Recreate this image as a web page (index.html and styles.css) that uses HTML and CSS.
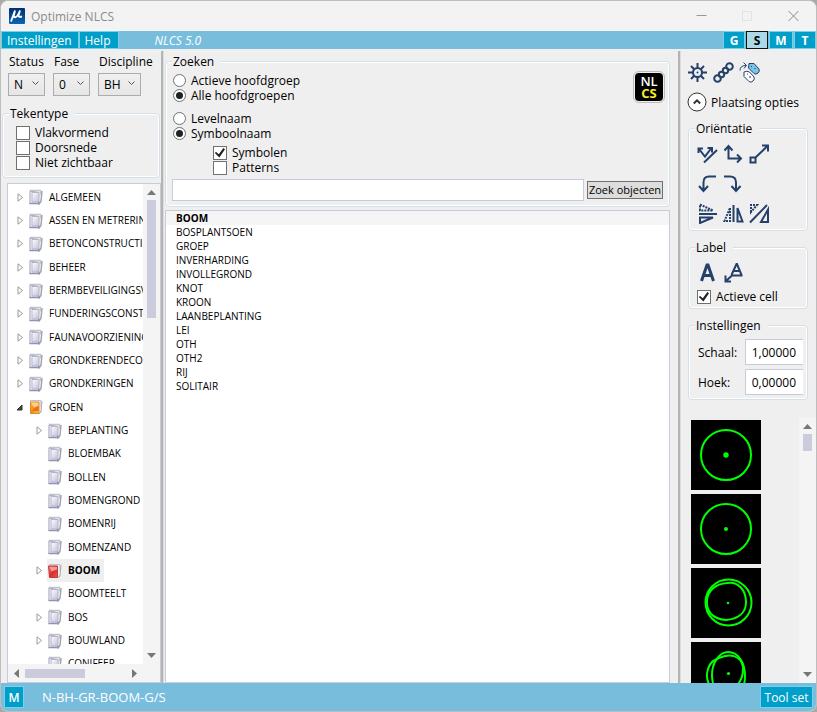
FILE: index.html
```html
<!DOCTYPE html>
<html lang="nl">
<head>
<meta charset="utf-8">
<meta name="viewport" content="width=device-width, initial-scale=1">
<title>Optimize NLCS</title>
<link rel="stylesheet" href="styles.css">
</head>
<body>
<svg class="defs" aria-hidden="true">
  <defs>
    <linearGradient id="gGrey" x1="0" y1="0" x2="1" y2="1"><stop offset="0" stop-color="#fff"/><stop offset="1" stop-color="#bfc0d8"/></linearGradient>
    <linearGradient id="gOrange" x1="0" y1="0" x2="1" y2="1"><stop offset="0" stop-color="#ffb84a"/><stop offset=".5" stop-color="#f08a1c"/><stop offset="1" stop-color="#ffc45c"/></linearGradient>
    <linearGradient id="gRed" x1="0" y1="0" x2="1" y2="1"><stop offset="0" stop-color="#f58a85"/><stop offset=".5" stop-color="#d92d2d"/><stop offset="1" stop-color="#e8544f"/></linearGradient>
    <symbol id="book" viewBox="0 0 14 16">
      <path d="M1.500 1.500h10v12h-10z" fill="#f3f3f8" stroke="#c4c4cc" stroke-width="1.500"/>
      <path d="M13 2l-1 10-2 3-1-4" fill="#fff" stroke="#a3a3b0" stroke-width="1.500"/>
      <path d="M1 2v12.500h8.500V3.500z" fill="#f4f4fa" stroke="#a9a9c0"/>
      <path d="M3 3.500h7v8.500l-1 1H3z" fill="url(#gGrey)" stroke="#b4b4cc"/>
      <path d="M.5 14.500h9l1-1.500" fill="none" stroke="#9191b2" stroke-width="1.400"/>
    </symbol>
    <symbol id="bookOrange" viewBox="0 0 14 16">
      <path d="M1.500 1.500h10.500v12H1.500z" fill="#f7f3e8" stroke="#c0c0c8"/>
      <path d="M13 2l-1 10-2 3" fill="#fff" stroke="#a9a9b4"/>
      <path d="M1.500 3h8.500v11.500H1.500z" fill="url(#gOrange)" stroke="#d98a2a"/>
      <path d="M2 3.500l3 5 4.500-2v-3z" fill="#ffd08a"/><path d="M3 12l3-3 3.500-2v5z" fill="#ee6e12"/>
    </symbol>
    <symbol id="bookRed" viewBox="0 0 14 16">
      <path d="M1.500 1.500h10.500v12H1.500z" fill="#f4eeee" stroke="#c0c0c8"/>
      <path d="M13 2l-1 10-2 3" fill="#fff" stroke="#a9a9b4"/>
      <path d="M.5 3h9v11.500H1.500z" fill="url(#gRed)" stroke="#c23a3a"/>
      <path d="M1.500 4l2 4.500 5.500-2V4z" fill="#f09a96"/>
    </symbol>
    <symbol id="closed" viewBox="0 0 7 9"><path d="M1 .8v7.400l4.500-3.700z" fill="#fff" stroke="#999"/></symbol>
    <symbol id="open" viewBox="0 0 7 9"><path d="M5 2v5H0z" fill="#444" stroke="#333"/></symbol>
    <symbol id="up" viewBox="0 0 9 5"><path d="M0 5l4.500-5L9 5z" fill="#777"/></symbol>
    <symbol id="down" viewBox="0 0 9 5"><path d="M0 0l4.500 5L9 0z" fill="#777"/></symbol>
    <symbol id="left" viewBox="0 0 5 9"><path d="M5 0L0 4.500 5 9z" fill="#777"/></symbol>
    <symbol id="right" viewBox="0 0 5 9"><path d="M0 0l5 4.500L0 9z" fill="#777"/></symbol>
  </defs>
</svg>
<div class="window">
  <header class="titlebar">
    <svg class="logo" viewBox="0 0 16 16"><defs><linearGradient id="gBlue" x1="0" y1="0" x2="0" y2="1"><stop offset="0" stop-color="#002e6e"/><stop offset="1" stop-color="#0a66b8"/></linearGradient></defs><rect width="16" height="16" rx="1" fill="url(#gBlue)"/><path d="M6 2.500L2 13.500M6 2.500L4.800 7.500q-.3 2 1.500 1.800Q8.500 9 11 2.500L9.500 7.500q-.3 2 3.500 1" fill="none" stroke="#fff" stroke-width="1.900"/></svg>
    <span class="title">Optimize NLCS</span>
    <button class="caption" aria-label="Minimaliseren"><svg viewBox="0 0 11 11"><path d="M.5 4.500h10" stroke="#999"/></svg></button>
    <button class="caption" aria-label="Maximaliseren"><svg viewBox="0 0 11 11"><path d="M.5.5h9v9h-9z" stroke="#e2e2e2"/></svg></button>
    <button class="caption" aria-label="Sluiten"><svg viewBox="0 0 11 11"><path d="M.5 0l10 10M10.500 0l-10 10" stroke="#8a8a8a"/></svg></button>
  </header>
  <nav class="menubar">
    <button class="menu">Instellingen</button><button class="menu">Help</button>
    <em class="version">NLCS 5.0</em>
    <div class="modes"><button class="mode">G</button><button class="mode active">S</button><button class="mode">M</button><button class="mode">T</button></div>
  </nav>
  <main class="content">
    <section class="side">
      <div class="selects">
        <div class="field"><label for="status">Status</label><div class="combo"><select id="status"><option>N</option></select><svg viewBox="0 0 7 4"><path d="M.5.5l3 3 3-3"/></svg></div></div>
        <div class="field"><label for="fase">Fase</label><div class="combo"><select id="fase"><option>0</option></select><svg viewBox="0 0 7 4"><path d="M.5.5l3 3 3-3"/></svg></div></div>
        <div class="field"><label for="discipline">Discipline</label><div class="combo"><select id="discipline"><option>BH</option></select><svg viewBox="0 0 7 4"><path d="M.5.5l3 3 3-3"/></svg></div></div>
      </div>
      <fieldset class="group types">
        <legend>Tekentype</legend>
        <label class="check"><input type="checkbox">Vlakvormend</label>
        <label class="check"><input type="checkbox">Doorsnede</label>
        <label class="check"><input type="checkbox">Niet zichtbaar</label>
      </fieldset>
      <div class="treebox">
        <ul class="tree">
          <li><svg class="arrow"><use href="#closed"/></svg><svg class="book"><use href="#book"/></svg><span>ALGEMEEN</span></li>
          <li><svg class="arrow"><use href="#closed"/></svg><svg class="book"><use href="#book"/></svg><span>ASSEN EN METRERIN</span></li>
          <li><svg class="arrow"><use href="#closed"/></svg><svg class="book"><use href="#book"/></svg><span>BETONCONSTRUCTIE</span></li>
          <li><svg class="arrow"><use href="#closed"/></svg><svg class="book"><use href="#book"/></svg><span>BEHEER</span></li>
          <li><svg class="arrow"><use href="#closed"/></svg><svg class="book"><use href="#book"/></svg><span>BERMBEVEILIGINGSV</span></li>
          <li><svg class="arrow"><use href="#closed"/></svg><svg class="book"><use href="#book"/></svg><span>FUNDERINGSCONSTR</span></li>
          <li><svg class="arrow"><use href="#closed"/></svg><svg class="book"><use href="#book"/></svg><span>FAUNAVOORZIENING</span></li>
          <li><svg class="arrow"><use href="#closed"/></svg><svg class="book"><use href="#book"/></svg><span>GRONDKERENDECON</span></li>
          <li><svg class="arrow"><use href="#closed"/></svg><svg class="book"><use href="#book"/></svg><span>GRONDKERINGEN</span></li>
          <li><svg class="arrow"><use href="#open"/></svg><svg class="book"><use href="#bookOrange"/></svg><span>GROEN</span></li>
          <li class="child"><svg class="arrow"><use href="#closed"/></svg><svg class="book"><use href="#book"/></svg><span>BEPLANTING</span></li>
          <li class="child"><svg class="arrow"></svg><svg class="book"><use href="#book"/></svg><span>BLOEMBAK</span></li>
          <li class="child"><svg class="arrow"></svg><svg class="book"><use href="#book"/></svg><span>BOLLEN</span></li>
          <li class="child"><svg class="arrow"></svg><svg class="book"><use href="#book"/></svg><span>BOMENGROND</span></li>
          <li class="child"><svg class="arrow"></svg><svg class="book"><use href="#book"/></svg><span>BOMENRIJ</span></li>
          <li class="child"><svg class="arrow"></svg><svg class="book"><use href="#book"/></svg><span>BOMENZAND</span></li>
          <li class="child selected"><svg class="arrow"><use href="#closed"/></svg><div class="mark"><svg class="book"><use href="#bookRed"/></svg><span>BOOM</span></div></li>
          <li class="child"><svg class="arrow"></svg><svg class="book"><use href="#book"/></svg><span>BOOMTEELT</span></li>
          <li class="child"><svg class="arrow"><use href="#closed"/></svg><svg class="book"><use href="#book"/></svg><span>BOS</span></li>
          <li class="child"><svg class="arrow"><use href="#closed"/></svg><svg class="book"><use href="#book"/></svg><span>BOUWLAND</span></li>
          <li class="child"><svg class="arrow"></svg><svg class="book"><use href="#book"/></svg><span>CONIFEER</span></li>
        </ul>
        <div class="vscroll tree-v"><svg class="tick"><use href="#up"/></svg><div class="track"><i class="thumb"></i></div><svg class="tick"><use href="#down"/></svg></div>
        <div class="hscroll"><svg class="htick"><use href="#left"/></svg><div class="track"><i class="thumb"></i></div><svg class="htick"><use href="#right"/></svg></div>
      </div>
    </section>
    <div class="splitter"></div>
    <section class="center">
      <fieldset class="group search">
        <legend>Zoeken</legend>
        <div class="search-top">
          <div class="options">
            <label class="check"><input type="radio" name="scope">Actieve hoofdgroep</label>
            <label class="check"><input type="radio" name="scope" checked>Alle hoofdgroepen</label>
            <label class="check spaced"><input type="radio" name="by">Levelnaam</label>
            <label class="check"><input type="radio" name="by" checked>Symboolnaam</label>
            <div class="sub">
              <label class="check"><input type="checkbox" checked>Symbolen</label>
              <label class="check"><input type="checkbox">Patterns</label>
            </div>
          </div>
          <div class="nlcs"><span>NL</span><span class="cs">CS</span></div>
        </div>
        <div class="query"><input type="text" aria-label="Zoekterm"><button>Zoek objecten</button></div>
      </fieldset>
      <ul class="results">
        <li class="current">BOOM</li><li>BOSPLANTSOEN</li><li>GROEP</li><li>INVERHARDING</li><li>INVOLLEGROND</li><li>KNOT</li><li>KROON</li><li>LAANBEPLANTING</li><li>LEI</li><li>OTH</li><li>OTH2</li><li>RIJ</li><li>SOLITAIR</li>
      </ul>
    </section>
    <div class="splitter"></div>
    <section class="tools">
      <div class="iconbar">
        <button aria-label="Opties"><svg viewBox="0 0 21 21"><circle cx="10.500" cy="10.500" r="4.500"/><circle class="solid" cx="10.500" cy="10.500" r="1"/><path d="M10.500 1v5M10.500 15v5M1 10.500h5M15 10.500h5M4 4l3 3M14 14l3 3M17 4l-3 3M7 14l-3 3"/></svg></button>
        <button aria-label="Koppelen"><svg viewBox="0 0 21 21"><circle cx="4.500" cy="16.500" r="3.300"/><circle cx="16.500" cy="4.500" r="3.300"/><circle cx="8.500" cy="12.500" r="2.700"/><circle cx="12.500" cy="8.500" r="2.700"/></svg></button>
        <button aria-label="Label wisselen"><svg viewBox="0 0 21 21"><path class="thin" fill="#79c3e6" d="M10 1.500h5l5 5.500q1 2.500-1 4-2 2-4 .5L9.500 6z"/><path class="thin" fill="#fff" d="M5 10q3-1.500 5.500 0l4.500 5q1 2-1 4-2 2-4 .5L5 14.500z"/><path class="thin" d="M1 8.500Q1 3.500 7 3.500M4.500.5l3 3-2.500 3"/><path class="thin" d="M12 4.500h1M15.500 6.500h1M8 12h1M11 14v2"/></svg></button>
      </div>
      <button class="expander"><svg viewBox="0 0 20 20"><circle cx="10" cy="10" r="9" fill="#fff" stroke="#333"/><path d="M6.800 11.500L10 8.300l3.200 3.200" fill="none" stroke="#333" stroke-width="2"/></svg>Plaatsing opties</button>
      <fieldset class="group orient">
        <legend>Oriëntatie</legend>
        <div class="row">
          <button aria-label="Volg lijn"><svg viewBox="0 0 21 21"><path d="M7 19.500L20 7M2 6l6 7.500L14 5.500M1.500 10V5.500H6M10.500 5H15v4.500"/></svg></button>
          <button aria-label="Haaks"><svg viewBox="0 0 21 21"><path d="M5.500 3v12.500h12M1.500 7.500l4-4.500 4 4.500M14 11.500l4 4-4 4"/></svg></button>
          <button aria-label="Schalen"><svg viewBox="0 0 21 21"><path d="M1.500 14.500h5v5h-5zM6.500 14.500L19 2.500M13 2.500h6v6"/></svg></button>
        </div>
        <div class="row">
          <button aria-label="Linksom"><svg viewBox="0 0 21 21"><path d="M19 3.500h-7q-5.500 0-5.500 6v8M2 13l4.500 5 4.500-5"/></svg></button>
          <button aria-label="Rechtsom"><svg viewBox="0 0 21 21"><path d="M1 3.500h6q6 0 6 6v8M8.500 13l4.500 5 4.500-5"/></svg></button>
        </div>
        <div class="row">
          <button aria-label="Spiegel verticaal"><svg viewBox="0 0 21 21"><path d="M2 11h18M3 14.500v5.500L16 14.500z"/><path class="dots" d="M3 7.500V1.500L16 7.500z"/></svg></button>
          <button aria-label="Spiegel horizontaal"><svg viewBox="0 0 21 21"><path d="M10.500 2v17M14.500 5v13.500h5z"/><path class="dots" d="M7 5v13H1.500z"/></svg></button>
          <button aria-label="Spiegel diagonaal"><svg viewBox="0 0 21 21"><path d="M1 19.500L18 2M19 6.500V19h-7z"/><path class="dots" d="M2 9V2h6z"/></svg></button>
        </div>
      </fieldset>
      <fieldset class="group label">
        <legend>Label</legend>
        <div class="row">
          <button aria-label="Tekst"><svg viewBox="0 0 21 21"><path class="bold" d="M4.500 19L10 3h1l5.500 16M6.500 13.500h8"/></svg></button>
          <button aria-label="Tekst met pijl"><svg viewBox="0 0 21 21"><path d="M8.500 13L13.500 2h.5l4.500 11M10.500 9h6M19.500 13.500H9L3 19M2.500 13.500v6H8"/></svg></button>
        </div>
        <label class="check"><input type="checkbox" checked>Actieve cell</label>
      </fieldset>
      <fieldset class="group settings">
        <legend>Instellingen</legend>
        <div class="pair"><label for="schaal">Schaal:</label><input id="schaal" type="text" value="1,00000"></div>
        <div class="pair"><label for="hoek">Hoek:</label><input id="hoek" type="text" value="0,00000"></div>
      </fieldset>
      <div class="gallery">
        <div class="thumbs">
          <svg viewBox="0 0 70 70"><circle cx="35" cy="35" r="25"/><circle class="dot" cx="35" cy="35" r="2.700"/></svg>
          <svg viewBox="0 0 70 70"><circle cx="35" cy="35" r="25"/><circle class="dot" cx="35" cy="35" r="2"/></svg>
          <svg viewBox="0 0 70 70"><circle cx="37.500" cy="34.500" r="23"/><path d="M36 15C47 13 55 22 55 34C55 45 47 51 35 52C21 51 15 43 16 32C17 22 25 16 36 15z"/><circle class="dot" cx="37" cy="35" r="1.300"/></svg>
          <svg viewBox="0 0 70 70"><path d="M37 10C47 10 54 20 54 34C54 49 46 55 37 55C27 55 21 45 21 33C21 20 29 10 37 10z"/><path d="M28 16C38 11 50 13 52 25C53 42 42 48 32 51C17 48 14 37 17 27C19 20 23 18 28 16z"/><circle class="dot" cx="37.500" cy="31.500" r="1.600"/></svg>
        </div>
        <div class="vscroll"><svg class="tick"><use href="#up"/></svg><div class="track"><i class="thumb"></i></div><svg class="tick"><use href="#down"/></svg></div>
      </div>
    </section>
  </main>
  <footer class="statusbar"><button class="model">M</button><span>N-BH-GR-BOOM-G/S</span><button class="toolset">Tool set</button></footer>
</div>
</body>
</html>
```
FILE: styles.css
```css
* { box-sizing: border-box; }
body { margin: 0; background: #a9a9a9; color: #000; font: 12px/15px "Open Sans", "Noto Sans", sans-serif; }
button, input, select { font: inherit; color: inherit; margin: 0; padding: 0; border-radius: 0; }
button { border: 0; background: none; }
ul { list-style: none; margin: 0; padding: 0; }
svg { display: block; flex: none; }
.defs { position: absolute; width: 0; height: 0; }

.window { height: 100vh; display: flex; flex-direction: column; overflow: hidden; background: #efefef; border: 1px solid #bdbdbd; border-radius: 8px; }

.titlebar { height: 30px; flex: none; display: flex; align-items: center; background: #f3f3f3; padding: 0 0 0 8px; }
.logo { width: 16px; height: 16px; }
.title { flex: 1; margin-left: 6px; color: #8b8b8b; }
.caption { width: 46px; height: 28px; display: grid; place-items: center; }
.caption svg { width: 11px; height: 11px; fill: none; }

.menubar { height: 18px; flex: none; display: flex; background: #79bddd; }
.menu, .mode, .model, .toolset { background: #009fca; color: #fff; border: 1px solid #79d0e8; }
.menu { padding: 1px 6px 0 5px; line-height: 15px; font-weight: 500; }
.menu + .menu { padding-right: 8px; }
.version { margin-left: 35px; padding-top: 1px; line-height: 17px; color: #fff; font-weight: 500; }
.modes { margin-left: auto; display: flex; gap: 1px; }
.mode { width: 22px; padding-top: 1px; font-weight: 700; line-height: 15px; }
.mode:nth-child(3) { width: 24px; }
.mode.active { background: #add8e6; color: #000; border-color: #111; }

.content { flex: 1; min-height: 0; display: flex; }
.splitter { width: 3px; flex: none; margin-top: 2px; background: #b4b4b4; border-right: 1px solid #dcdcdc; }
.side { width: 160px; flex: none; display: flex; flex-direction: column; }
.selects { display: flex; gap: 8px; padding: 5px 7px 0; }
.field { width: 37px; }
.field label { display: block; margin-left: 1px; white-space: nowrap; }
.combo { margin-top: 4px; position: relative; }
.field:last-child { width: 43px; }
.combo select { width: 100%; height: 23px; appearance: none; border: 1px solid #acacac; background: linear-gradient(#f0f0f0, #e6e6e6); padding-left: 5px; }
.combo svg { position: absolute; right: 6px; top: 8px; width: 7px; height: 4px; fill: none; stroke: #555; }

.group { min-width: 0; margin: 0; border: 1px solid #d3e0e9; border-radius: 4px; box-shadow: inset 0 0 0 1px #fff; }
.group legend { padding: 0 7px 0 1px; line-height: 15px; background: #efefef; }
.types { margin: 10px 1px 0; padding: 4px 12px 7px 13px; }
.types legend { margin-left: -7px; }
.check { display: flex; align-items: center; height: 15px; gap: 5px; white-space: nowrap; }
.check input { appearance: none; flex: none; display: grid; place-items: center; width: 14px; height: 14px; border: 1px solid #707070; background: #fff; }
.check input[type=radio] { width: 13px; height: 13px; border-radius: 50%; }
.check input[type=radio]:checked::before { content: ""; width: 7px; height: 7px; border-radius: 50%; background: #212121; }
.check input[type=checkbox]:checked::before { content: ""; width: 10px; height: 10px; background: #212121; clip-path: polygon(8% 42%, 38% 68%, 84% 4%, 100% 18%, 44% 100%, 0 58%); }

.treebox { flex: 1; min-height: 0; margin: 5px 0 0 6px; border: 1px solid #c9cadb; background: #fff; display: grid; grid-template: minmax(0, 1fr) 18px / minmax(0, 1fr) 17px; }
.tree { overflow: hidden; font-size: 10px; padding-top: 1px; }
.tree li { height: 23px; display: flex; align-items: center; padding-left: 9px; white-space: nowrap; }
.tree li:nth-child(3n+1) { height: 24px; }
.tree li.child { padding-left: 28px; }
.arrow { width: 7px; height: 9px; margin-right: 5px; overflow: visible; }
.book { width: 14px; height: 16px; margin-right: 6px; }
.mark { display: flex; align-items: center; height: 23px; margin-left: -1px; padding: 0 4px 0 1px; background: #efefef; font-weight: 700; }
.vscroll { width: 17px; display: flex; flex-direction: column; align-items: center; padding: 6px 0; background: #f4f4f4; }
.tick { width: 9px; height: 5px; }
.track { flex: 1; }
.thumb { display: block; background: #cacbdc; }
.vscroll .thumb { width: 9px; height: 17px; margin-top: 5px; }
.tree-v .thumb { height: 118px; }
.hscroll { grid-column: 1 / 3; display: flex; align-items: center; padding: 0 23px 0 6px; background: #f4f4f4; }
.htick { width: 5px; height: 9px; }
.hscroll .thumb { width: 60px; height: 9px; margin-left: 6px; }

.center { flex: 1; min-width: 0; display: flex; flex-direction: column; padding: 5px 8px 0 0; margin-left: 1px; }
.search { padding: 4px 6px 5px; }
.search-top { display: flex; justify-content: space-between; align-items: flex-start; }
.options .check { padding-left: 1px; }
.options .spaced { margin-top: 8px; }
.sub { margin: 4px 0 0 40px; }
.nlcs { width: 28px; height: 28px; border-radius: 4px; background: #000; color: #fff; outline: 1px solid #bbb; outline-offset: 1px; font-size: 13px; line-height: 12px; font-weight: 600; text-align: center; padding-top: 2px; }
.nlcs span { display: block; }
.nlcs .cs { color: #f5ee22; font-weight: 700; }
.query { display: flex; align-items: center; gap: 3px; margin-top: 4px; }
.query input { flex: 1; min-width: 0; height: 22px; border: 1px solid #c9cadb; background: #fff; }
.query button { width: 76px; height: 18px; border: 1px solid #707070; background: #ddd; font-size: 11px; line-height: 14px; white-space: nowrap; }
.results { flex: 1; margin-top: 3px; border: 1px solid #c9cadb; background: #fff; font-size: 10px; line-height: 14px; }
.results li { padding-left: 10px; }
.results .current { font-weight: 700; background: #f5f5f5; }

.tools { width: 135px; flex: none; display: flex; flex-direction: column; padding-top: 13px; }
.tools svg { fill: none; stroke: #24406b; stroke-width: 2; }
.tools .thin { stroke-width: 1; }
.tools .bold { stroke-width: 3; }
.tools .solid { fill: #24406b; stroke: none; }
.tools .dots { stroke-dasharray: 2 1; }
.iconbar { display: flex; gap: 5px; padding-left: 6px; }
.iconbar svg, .row svg { width: 21px; height: 21px; }
.expander { display: flex; align-items: center; gap: 4px; margin: 9px 0 0 6px; white-space: nowrap; }
.expander svg { width: 20px; height: 20px; stroke-width: 1; }
.tools .group { margin: 0 8px 0 7px; padding: 0 8px; }
.tools .group legend { margin-left: -2px; }
.tools .orient { margin-top: 9px; padding-top: 7px; padding-bottom: 6px; }
.row { display: flex; gap: 5px; }
.row + .row { margin-top: 9px; }
.tools .label { margin-top: 9px; padding-top: 7px; padding-bottom: 4px; }
.label .check { margin-top: 6px; }
.tools .settings { margin-top: 9px; padding: 6px 4px 4px 9px; }
.tools .settings legend { margin-left: -3px; }
.pair { display: flex; align-items: center; justify-content: space-between; }
.pair + .pair { margin-top: 4px; }
.pair input { width: 58px; height: 26px; border: 1px solid #c9cadb; border-right: 0; background: #fff; text-align: right; padding-right: 7px; }
.gallery { flex: 1; min-height: 0; margin-top: 18px; display: flex; justify-content: space-between; }
.thumbs { overflow: hidden; padding: 2px 0 0 10px; display: flex; flex-direction: column; gap: 4px; }
.thumbs svg { width: 70px; height: 70px; background: #000; stroke: #0f0; }
.thumbs .dot { fill: #0f0; stroke: none; }
.tools .tick { stroke: none; }

.statusbar { height: 28px; flex: none; display: flex; align-items: center; background: #79bddd; color: #fff; padding: 0 3px; }
.statusbar button { height: 22px; }
.model { width: 20px; font-weight: 600; }
.statusbar span { margin-left: 18px; font-size: 13px; }
.toolset { margin-left: auto; width: 53px; white-space: nowrap; }
```
